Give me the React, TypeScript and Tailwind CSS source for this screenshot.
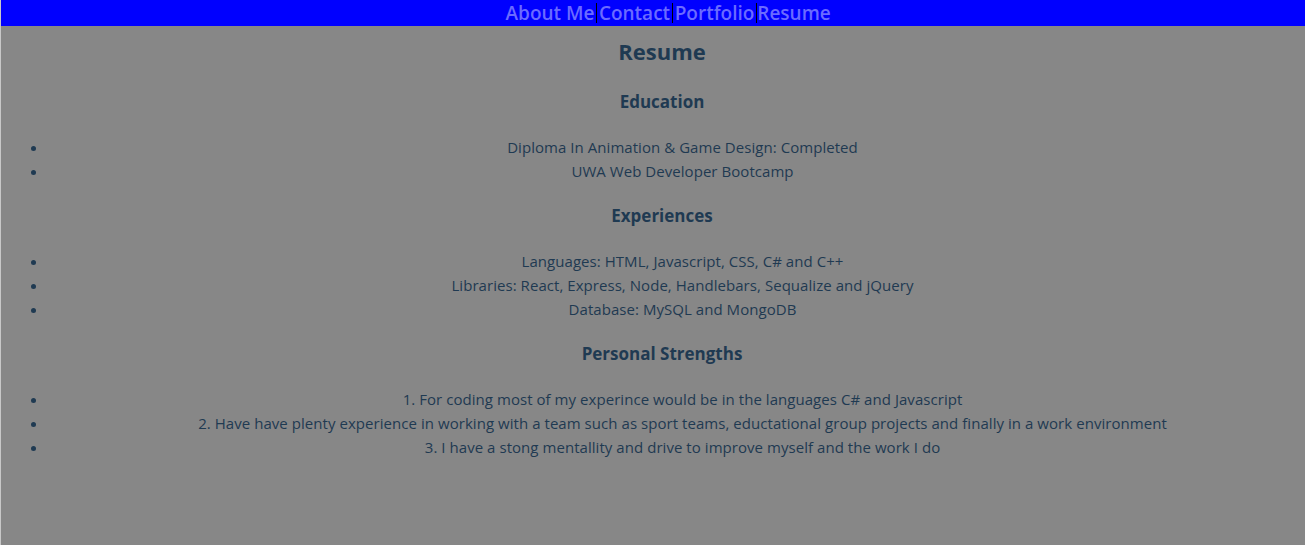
const SECTIONS = [
  {
    title: 'Education',
    items: ['Diploma In Animation & Game Design: Completed', 'UWA Web Developer Bootcamp'],
  },
  {
    title: 'Experiences',
    items: [
      'Languages: HTML, Javascript, CSS, C# and C++',
      'Libraries: React, Express, Node, Handlebars, Sequalize and jQuery',
      'Database: MySQL and MongoDB',
    ],
  },
  {
    title: 'Personal Strengths',
    items: [
      '1. For coding most of my experince would be in the languages C# and Javascript',
      '2. Have have plenty experience in working with a team such as sport teams, eductational group projects and finally in a work environment',
      '3. I have a stong mentallity and drive to improve myself and the work I do',
    ],
  },
];

const NAV = [
  { label: 'About Me', w: 'w-[92px]' },
  { label: 'Contact', w: 'w-[75px]' },
  { label: 'Portfolio', w: 'w-[83px]' },
  { label: 'Resume', w: 'w-[74px]' },
];

export default function App() {
  return (
    <div className="min-h-[545px] bg-[#878787] border-l border-[#c8c8c8] text-[#1f3a52] font-['Open_Sans',sans-serif]">
      {/* Header */}
      <nav className="h-[26px] bg-[#0000ff] flex items-center justify-center pl-[29px]">
        {NAV.map((n, i) => (
          <div key={n.label} className="flex items-center">
            {i > 0 && <span className="block w-px h-[20px] bg-black" />}
            <a href="#" className={`${n.w} text-center text-[19px] leading-[20px] font-semibold text-[#6b6bff] whitespace-nowrap`}>
              {n.label}
            </a>
          </div>
        ))}
      </nav>

      <main className="pb-10">
        <h1 className="mt-[9px] text-center text-[22px] leading-[32px] font-bold pl-[18px]">Resume</h1>
        {SECTIONS.map((s, idx) => (
          <section key={s.title}>
            <h3 className={`${idx === 0 ? 'mt-[22px]' : 'mt-5'} text-center text-[17px] leading-[26px] font-bold pl-[18px]`}>
              {s.title}
            </h3>
            <ul className="mt-5 pl-[47px] list-disc">
              {s.items.map((it) => (
                <li key={it} className="text-center text-[15px] leading-[24px] tracking-[0.05px] pl-[12px]">
                  {it}
                </li>
              ))}
            </ul>
          </section>
        ))}
      </main>
    </div>
  );
}
